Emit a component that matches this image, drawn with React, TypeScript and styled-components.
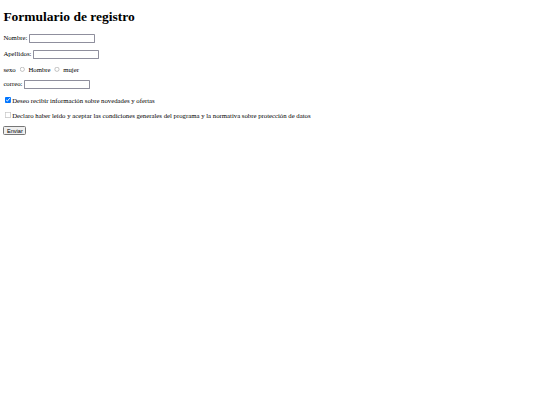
import React from "react";
import styled, { createGlobalStyle } from "styled-components";

const GlobalStyle = createGlobalStyle`
  html, body {
    margin: 0;
    background: #ffffff;
  }
`;

const Page = styled.div`
  zoom: 0.421875;
  margin: 8px;
  font-family: "Liberation Serif", "Times New Roman", serif;
  font-size: 16px;
  color: #000000;
`;

const Heading = styled.h1`
  font-size: 2em;
  font-weight: bold;
  margin: 0.67em 0;
`;

const Form = styled.form`
  display: block;
`;

const Row = styled.p`
  margin: 1em 0;
`;

const TextInput = styled.input.attrs({ type: "text" })`
  box-sizing: border-box;
  width: 157px;
  height: 21px;
  font-family: "Liberation Sans", Arial, sans-serif;
  font-size: 13.33px;
  border: 1px solid #8f8f9d;
  border-radius: 2px;
  padding: 1px 2px;
  vertical-align: baseline;
`;

const Radio = styled.input.attrs({ type: "radio" })`
  width: 14px;
  height: 14px;
  margin: 3px 3px 0 5px;
`;

const Check = styled.input.attrs({ type: "checkbox" })`
  width: 14px;
  height: 14px;
  margin: 3px 3px 3px 4px;
`;

const Submit = styled.input.attrs({ type: "submit" })`
  font-family: "Liberation Sans", Arial, sans-serif;
  font-size: 13.33px;
`;

export default function App() {
  return (
    <>
      <GlobalStyle />
      <Page>
        <Heading>Formulario de registro</Heading>
        <Form onSubmit={(e) => e.preventDefault()}>
          <Row>
            Nombre: <TextInput name="nombre" />
          </Row>
          <Row>
            Apellidos: <TextInput name="apellidos" />
          </Row>
          <Row>
            sexo <Radio name="sexo" value="hombre" /> Hombre{" "}
            <Radio name="sexo" value="mujer" /> mujer
          </Row>
          <Row>
            correo: <TextInput name="correo" />
          </Row>
          <Row>
            <Check name="novedades" defaultChecked />
            Deseo recibir información sobre novedades y ofertas
          </Row>
          <Row>
            <Check name="condiciones" />
            Declaro haber leído y aceptar las condiciones generales del programa y la normativa sobre protección de datos
          </Row>
          <Row>
            <Submit value="Enviar" />
          </Row>
        </Form>
      </Page>
    </>
  );
}
